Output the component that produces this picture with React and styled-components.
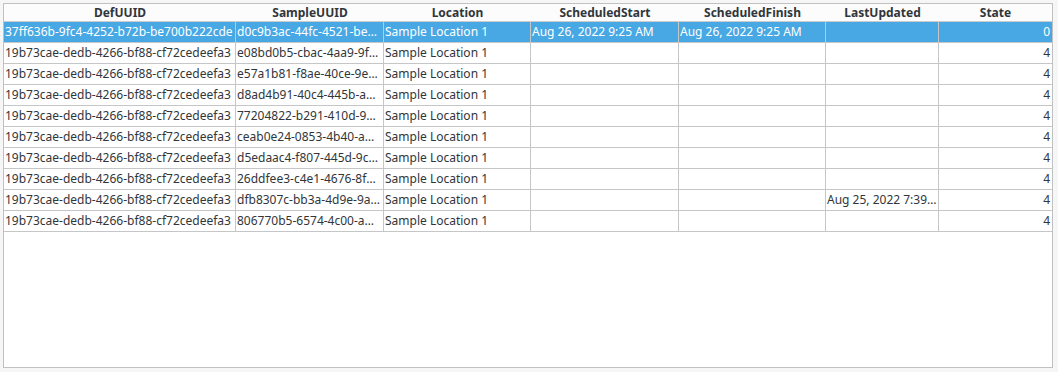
import styled, { createGlobalStyle } from "styled-components";

const GlobalStyle = createGlobalStyle`
  html, body {
    margin: 0;
    padding: 0;
    background: #f6f6f6;
  }
  body {
    font-family: "Noto Sans", "DejaVu Sans", sans-serif;
    font-size: 12px;
    color: #232629;
  }
`

const columns = [
    { key: "def", title: "DefUUID", width: 232 },
    { key: "sample", title: "SampleUUID", width: 148 },
    { key: "location", title: "Location", width: 147 },
    { key: "start", title: "ScheduledStart", width: 148 },
    { key: "finish", title: "ScheduledFinish", width: 147 },
    { key: "updated", title: "LastUpdated", width: 113, tight: true },
    { key: "state", title: "State", width: 113, align: "right" },
];

const DEF = "19b73cae-dedb-4266-bf88-cf72cedeefa3";
const LOC = "Sample Location 1";

const rows = [
    { def: "37ff636b-9fc4-4252-b72b-be700b222cde", sample: "d0c9b3ac-44fc-4521-be49-1f0e7c3a2b11", location: LOC, start: "Aug 26, 2022 9:25 AM", finish: "Aug 26, 2022 9:25 AM", updated: "", state: "0", selected: true },
    { def: DEF, sample: "e08bd0b5-cbac-4aa9-9f31-6c2d8e4a7b02", location: LOC, start: "", finish: "", updated: "", state: "4" },
    { def: DEF, sample: "e57a1b81-f8ae-40ce-9e12-7d3b5c9a0f44", location: LOC, start: "", finish: "", updated: "", state: "4" },
    { def: DEF, sample: "d8ad4b91-40c4-445b-a3c7-2e9f1b6d8a55", location: LOC, start: "", finish: "", updated: "", state: "4" },
    { def: DEF, sample: "77204822-b291-410d-9c4e-5a8b3f7d1e66", location: LOC, start: "", finish: "", updated: "", state: "4" },
    { def: DEF, sample: "ceab0e24-0853-4b40-a1f2-9d6c4e8b3a77", location: LOC, start: "", finish: "", updated: "", state: "4" },
    { def: DEF, sample: "d5edaac4-f807-445d-9c8a-3b7e1f5d2c88", location: LOC, start: "", finish: "", updated: "", state: "4" },
    { def: DEF, sample: "26ddfee3-c4e1-4676-8f5b-1c9a7e3d4b99", location: LOC, start: "", finish: "", updated: "", state: "4" },
    { def: DEF, sample: "dfb8307c-bb3a-4d9e-9a6d-8e2f4c1b7a10", location: LOC, start: "", finish: "", updated: "Aug 25, 2022 7:39 PM", state: "4" },
    { def: DEF, sample: "806770b5-6574-4c00-ad8e-5f1d9b2c6e21", location: LOC, start: "", finish: "", updated: "", state: "4" },
];

const gridTemplate = columns.map((c) => `${c.width}px`).join(" ");

const Frame = styled.div`
  margin: 3px 0 0 3px;
  width: 1050px;
  height: 365px;
  box-sizing: border-box;
  border: 1px solid #bfc1c3;
  background: #ffffff;
  overflow: hidden;
`

const HeaderRow = styled.div`
  display: grid;
  grid-template-columns: ${gridTemplate};
  height: 18px;
  box-sizing: border-box;
  border-bottom: 1px solid #c9cbcd;
  background: #fcfcfc;
`

const HeaderCell = styled.div`
  font-weight: bold;
  color: #31363b;
  text-align: center;
  line-height: 17px;
  white-space: nowrap;
  overflow: hidden;
`

const Row = styled.div`
  display: grid;
  grid-template-columns: ${gridTemplate};
  height: 21px;
  background: ${(props) => (props.selected ? "#47a8e4" : "#ffffff")};
  color: ${(props) => (props.selected ? "#ffffff" : "#31363b")};
`

const Cell = styled.div`
  box-sizing: border-box;
  border-right: ${(props) => (props.last ? "none" : "1px solid #c4c6c8")};
  border-bottom: 1px solid #c4c6c8;
  padding: ${(props) => (props.tight ? "0 0 0 1px" : "0 2px 0 1px")};
  line-height: 20px;
  white-space: nowrap;
  overflow: hidden;
  text-overflow: ellipsis;
  text-align: ${(props) => props.align || "left"};
`

const App = () => {
    return (
        <>
            <GlobalStyle/>
            <Frame>
                <HeaderRow>
                    {columns.map((c) => (
                        <HeaderCell key={c.key}>{c.title}</HeaderCell>
                    ))}
                </HeaderRow>
                {rows.map((row, i) => (
                    <Row key={i} selected={row.selected}>
                        {columns.map((c, j) => (
                            <Cell key={c.key} align={c.align} tight={c.tight} last={j === columns.length - 1}>
                                {row[c.key]}
                            </Cell>
                        ))}
                    </Row>
                ))}
            </Frame>
        </>
    )
}

export default App
